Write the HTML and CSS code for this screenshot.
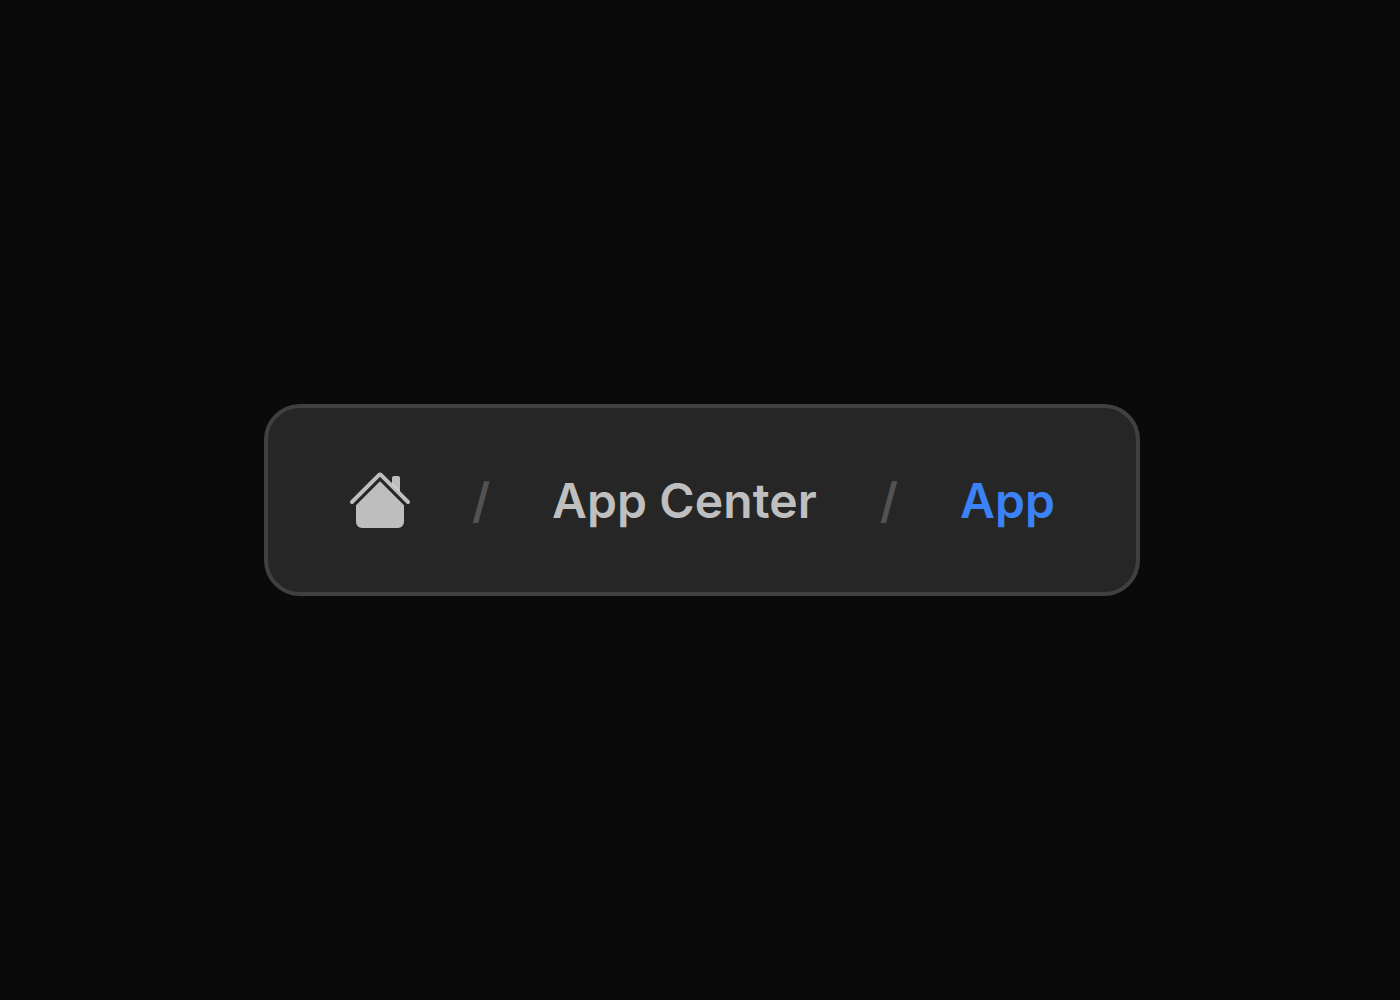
FILE: index.html
```
<!DOCTYPE html>
<html lang="en">
<head>
<meta charset="utf-8">
<title>App Center</title>
<link rel="stylesheet" href="styles.css">
</head>
<body>
<nav class="breadcrumb" aria-label="Breadcrumb">
  <a class="home" aria-label="Home">
    <svg class="home-icon" viewBox="0 0 16 16" fill="currentColor">
      <path d="M13 2.5V6l-2-2V2.5a.5.5 0 0 1 .5-.5h1a.5.5 0 0 1 .5.5z"/>
      <path d="M7.293 1.5a1 1 0 0 1 1.414 0l6.647 6.646a.5.5 0 0 1-.708.708L8 2.207 1.354 8.854a.5.5 0 1 1-.708-.708z"/>
      <path d="m8 3.293 6 6v4.207a1.5 1.5 0 0 1-1.5 1.5h-9A1.5 1.5 0 0 1 2 13.5V9.293z"/>
    </svg>
  </a>
  <span class="separator">/</span>
  <a class="crumb">App Center</a>
  <span class="separator">/</span>
  <a class="crumb current" aria-current="page">App</a>
</nav>
</body>
</html>
```
FILE: styles.css
```
body {
  margin: 0;
  height: 1000px;
  display: flex;
  align-items: center;
  justify-content: center;
  background: #0a0a0a;
  font-family: Inter, sans-serif;
}

.breadcrumb {
  box-sizing: border-box;
  width: 876px;
  height: 192px;
  margin-left: 4px;
  padding-left: 80px;
  display: flex;
  align-items: center;
  background: #262626;
  border: 4px solid #404040;
  border-radius: 36px;
}

.home {
  width: 61px;
}

.home-icon {
  display: block;
  width: 64px;
  height: 64px;
  color: rgba(255, 255, 255, 0.7);
}

.separator {
  box-sizing: border-box;
  width: 143px;
  padding: 2px 0 0 1px;
  text-align: center;
  font-size: 48px;
  line-height: 72px;
  font-weight: 600;
  color: #525252;
}

.crumb {
  padding-top: 2px;
  font-size: 48px;
  line-height: 72px;
  font-weight: 600;
  letter-spacing: 0.1px;
  color: #bfbfbf;
  white-space: nowrap;
}

.current {
  color: #3b82f6;
}
```
